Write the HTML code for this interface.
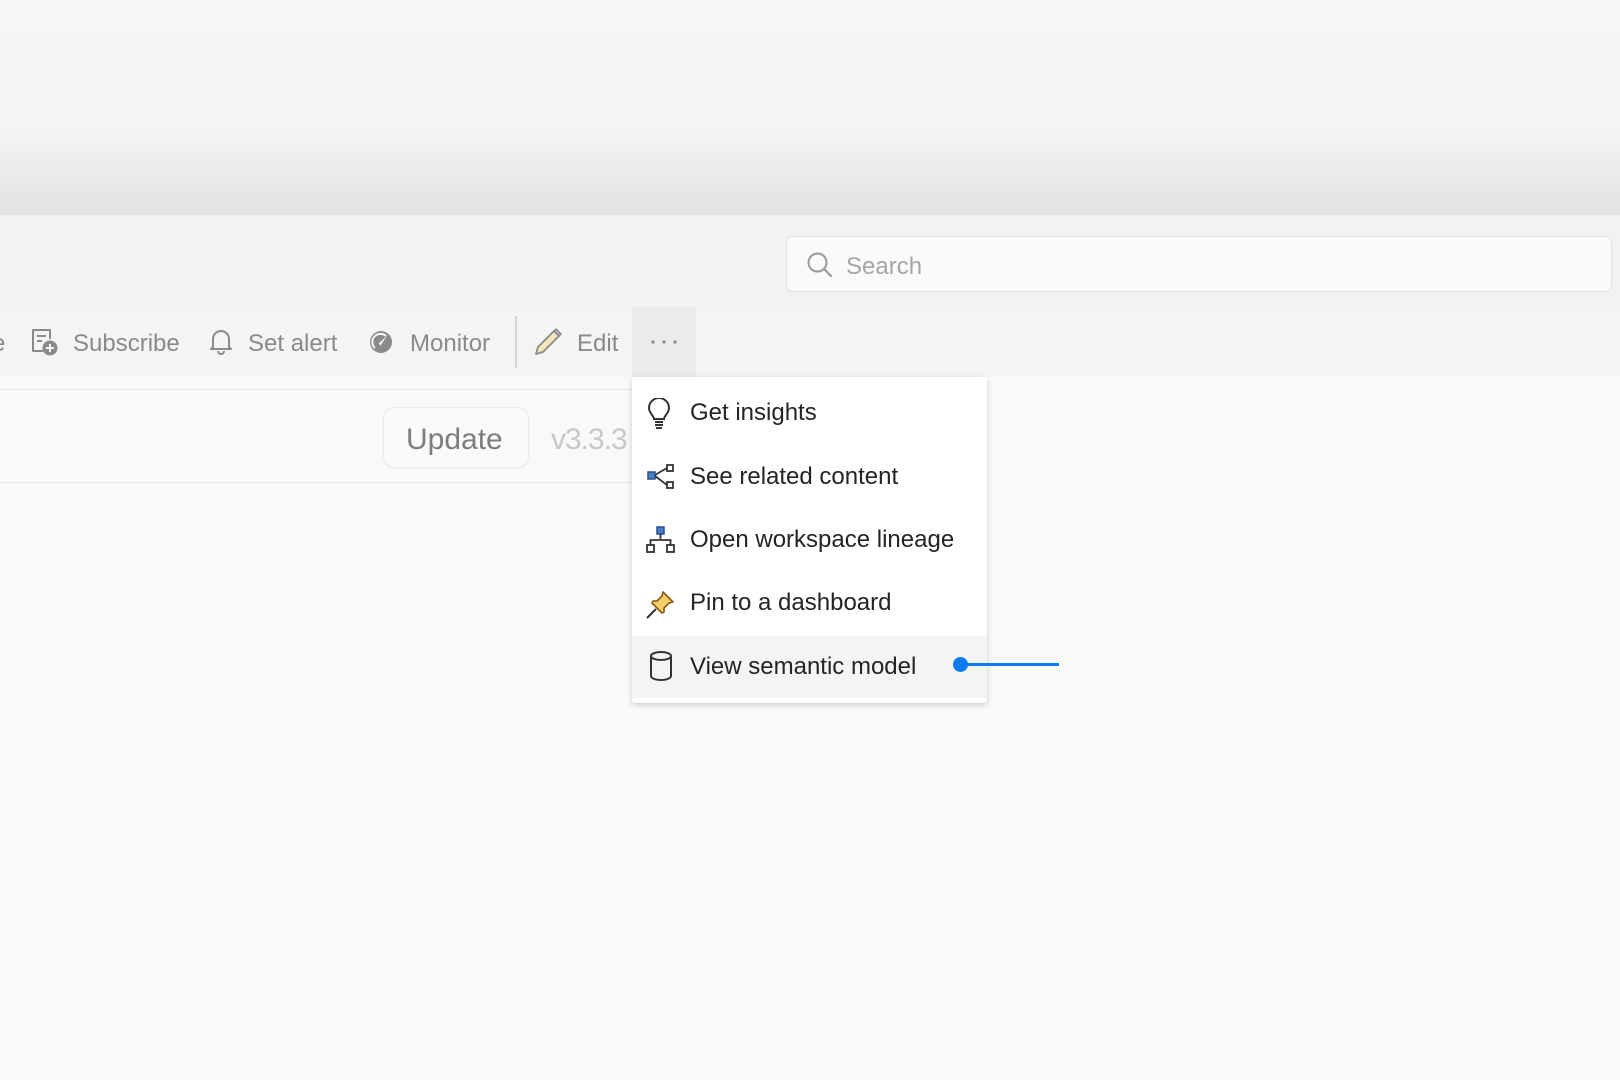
<!DOCTYPE html>
<html><head><meta charset="utf-8"><style>
*{margin:0;padding:0;box-sizing:border-box}
body{width:1620px;height:1080px;overflow:hidden;background:#f9f9f8;font-family:"Liberation Sans",sans-serif;position:relative}
.top{position:absolute;left:0;top:0;width:1620px;height:215px;background:linear-gradient(#f6f6f6 0%,#f4f4f4 60%,#e2e2e2 100%)}
.hdr{position:absolute;left:0;top:215px;width:1620px;height:92px;background:#f2f2f2}
.tb{position:absolute;left:0;top:307px;width:1620px;height:70px;background:#f4f4f4}
.line1{position:absolute;left:0;top:389px;width:632px;height:1px;background:#e6e6e6}
.line2{position:absolute;left:0;top:482px;width:632px;height:1px;background:#e6e6e6}
.t{position:absolute;font-size:24px;color:#8a8a8a;white-space:nowrap;line-height:30px}
.search{position:absolute;left:786px;top:236px;width:826px;height:56px;border:1px solid #e2e2e2;border-radius:6px;background:#fafaf9}
.more{position:absolute;left:632px;top:307px;width:64px;height:70px;background:#ebebeb}
.sep{position:absolute;left:515px;top:316px;width:2px;height:52px;background:#d6d6d6}
.upd{position:absolute;left:383px;top:407px;width:146px;height:61px;border:1px solid #ececec;border-radius:12px;background:#fafafa;box-shadow:0 1px 2px rgba(0,0,0,.05)}
.menu{position:absolute;left:632px;top:377px;width:355px;height:326px;background:#fff;border-radius:3px;box-shadow:0 2px 6px rgba(0,0,0,.18)}
.mi{position:absolute;left:58px;font-size:24px;color:#242424;white-space:nowrap;line-height:30px}
.sel{position:absolute;left:0;top:259px;width:355px;height:62px;background:#f4f4f4}
</style></head><body>
<div class="top"></div>
<div class="hdr"></div>
<div class="tb"></div>
<div class="line1"></div><div class="line2"></div>

<div class="search">
<svg style="position:absolute;left:19px;top:14px" width="28" height="28" viewBox="0 0 28 28"><circle cx="11.5" cy="11.5" r="9" fill="none" stroke="#9a9a9a" stroke-width="2"/><line x1="18" y1="18" x2="25" y2="25" stroke="#9a9a9a" stroke-width="2.2" stroke-linecap="round"/></svg>
<div class="t" style="left:59px;top:15px;color:#a5a5a5;font-size:24px">Search</div>
</div>

<div class="t" style="left:-8px;top:329px">e</div>
<svg style="position:absolute;left:29px;top:327px" width="30" height="30" viewBox="0 0 30 30"><path d="M14 24H4V3h17v9" fill="none" stroke="#8a8a8a" stroke-width="2" stroke-linejoin="round"/><path d="M8 9h9M8 14h5" stroke="#8a8a8a" stroke-width="2"/><circle cx="21" cy="21" r="7.5" fill="#8a8a8a"/><path d="M21 17v8M17 21h8" stroke="#f4f4f4" stroke-width="2"/></svg>
<div class="t" style="left:73px;top:329px">Subscribe</div>
<svg style="position:absolute;left:209px;top:329px" width="24" height="26" viewBox="0 0 24 26"><path d="M4 18V10a8 8 0 0 1 16 0v8l2 2H2z" fill="none" stroke="#8a8a8a" stroke-width="2" stroke-linejoin="round"/><path d="M9 22a3 3 0 0 0 6 0" fill="none" stroke="#8a8a8a" stroke-width="2"/></svg>
<div class="t" style="left:248px;top:329px">Set alert</div>
<svg style="position:absolute;left:369px;top:330px" width="24" height="24" viewBox="0 0 24 24"><circle cx="12" cy="12" r="11" fill="#8a8a8a"/><path d="M6 18a8 8 0 0 1 11-12" fill="none" stroke="#f4f4f4" stroke-width="2"/><path d="M18 6L9.5 13.5l2 2z" fill="#f4f4f4"/></svg>
<div class="t" style="left:410px;top:329px">Monitor</div>
<div class="sep"></div>
<svg style="position:absolute;left:533px;top:327px" width="30" height="30" viewBox="0 0 30 30"><path d="M3 27l2-7L21 4l5 5L10 25z" fill="#f2e6b8" stroke="#8a8a8a" stroke-width="1.8" stroke-linejoin="round"/><path d="M21 4l5 5 2-2-5-5z" fill="#c8a8d8" stroke="#8a8a8a" stroke-width="1.5"/></svg>
<div class="t" style="left:577px;top:329px">Edit</div>
<div class="more"></div>
<svg style="position:absolute;left:650px;top:339px" width="30" height="6" viewBox="0 0 30 6"><circle cx="3" cy="3" r="1.6" fill="#8a8a8a"/><circle cx="14" cy="3" r="1.6" fill="#8a8a8a"/><circle cx="25" cy="3" r="1.6" fill="#8a8a8a"/></svg>

<div class="upd"></div>
<div class="t" style="left:406px;top:423px;font-size:30px;color:#7d7d7d;line-height:34px">Update</div>
<div class="t" style="left:551px;top:423px;font-size:30px;color:#c8c8c8;line-height:34px;letter-spacing:-1px">v3.3.3</div>

<div class="menu">
<div class="sel"></div>
<svg style="position:absolute;left:14px;top:21px" width="26" height="32" viewBox="0 0 26 32"><path d="M8 21c0-3-5-6-5-11a10 10 0 0 1 20 0c0 5-5 8-5 11z" fill="none" stroke="#333" stroke-width="2"/><path d="M9 24h8M9 27h8M10 30h6" stroke="#333" stroke-width="2"/></svg>
<div class="mi" style="top:21px">Get insights</div>
<svg style="position:absolute;left:14px;top:86px" width="30" height="28" viewBox="0 0 30 28"><rect x="2" y="9" width="7" height="7" fill="#4a7fc6" stroke="#2a4f96" stroke-width="1.5"/><rect x="21" y="2" width="6" height="6" fill="#fff" stroke="#333" stroke-width="1.8"/><rect x="21" y="19" width="6" height="6" fill="#fff" stroke="#333" stroke-width="1.8"/><path d="M9 12L21 5M9 13l12 9" stroke="#333" stroke-width="1.8" fill="none"/></svg>
<div class="mi" style="top:85px">See related content</div>
<svg style="position:absolute;left:14px;top:148px" width="30" height="30" viewBox="0 0 30 30"><rect x="11" y="2" width="7" height="7" fill="#4a7fc6" stroke="#2a4f96" stroke-width="1.5"/><path d="M14.5 9v5M4.5 20v-5h20v5" fill="none" stroke="#333" stroke-width="1.8"/><rect x="1" y="20" width="7" height="7" fill="#fff" stroke="#333" stroke-width="1.8"/><rect x="21" y="20" width="7" height="7" fill="#fff" stroke="#333" stroke-width="1.8"/></svg>
<div class="mi" style="top:148px">Open workspace lineage</div>
<svg style="position:absolute;left:14px;top:212px" width="30" height="30" viewBox="0 0 30 30"><path d="M17 3l10 10-4 1-5 5 0 4-2 1-10-10 1-2 4 0 5-5z" fill="#f5cf6a" stroke="#8a5a10" stroke-width="1.6" stroke-linejoin="round"/><path d="M10 20L1 29" stroke="#333" stroke-width="2"/></svg>
<div class="mi" style="top:211px">Pin to a dashboard</div>
<svg style="position:absolute;left:16px;top:273px" width="26" height="32" viewBox="0 0 26 32"><ellipse cx="13" cy="6" rx="10" ry="4" fill="none" stroke="#333" stroke-width="2"/><path d="M3 6v20c0 2 4 4 10 4s10-2 10-4V6" fill="none" stroke="#333" stroke-width="2"/></svg>
<div class="mi" style="top:275px">View semantic model</div>
</div>
<div style="position:absolute;left:953px;top:657px;width:15px;height:15px;border-radius:50%;background:#0a7cf0"></div>
<div style="position:absolute;left:960px;top:663px;width:99px;height:3px;background:#0a7cf0"></div>
</body></html>
